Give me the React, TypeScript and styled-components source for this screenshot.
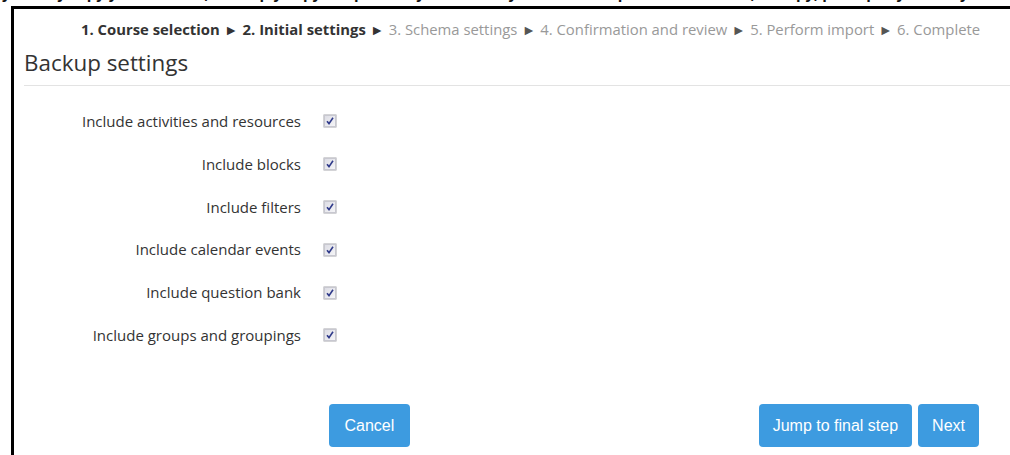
import React from "react";
import styled, { createGlobalStyle } from "styled-components";

const Global = createGlobalStyle`
  html, body { margin: 0; padding: 0; background: #fff; }
  body { font-family: "Open Sans", "Noto Sans", sans-serif; color: #333; overflow: hidden; }
`;

const Page = styled.div`
  width: 1010px;
  height: 455px;
  overflow: hidden;
  background: #fff;
`;

/* tail end of the previous paragraph, scrolled mostly out of view */
const Overflow = styled.div`
  height: 6px;
  overflow: hidden;
  position: relative;
`;

const OverflowText = styled.div`
  position: absolute;
  left: 2px;
  top: -17px;
  white-space: nowrap;
  font-family: "Open Sans", sans-serif;
  font-weight: 700;
  font-size: 15px;
  line-height: 20px;
  color: #111;
`;

const Frame = styled.div`
  margin-left: 11px;
  border-top: 3px solid #000;
  border-left: 3px solid #000;
  height: 460px;
  display: flex;
  flex-direction: column;
`;

const Steps = styled.div`
  padding: 10px 0 0 67px;
  font-size: 14.85px;
  line-height: 20px;
  white-space: nowrap;
  color: #999;
`;

const Step = styled.span<{ $done?: boolean }>`
  font-weight: ${(p) => (p.$done ? 700 : 400)};
  color: ${(p) => (p.$done ? "#333" : "#999")};
`;

const Arrow = styled.span<{ $done?: boolean }>`
  color: ${(p) => (p.$done ? "#333" : "#555")};
  font-size: 14px;
  margin: 0 4.5px;
`;

const Heading = styled.h2`
  margin: 8px 0 0 10px;
  font-size: 22.4px;
  font-weight: 400;
  line-height: 30px;
  color: #333;
`;

const Rule = styled.div`
  margin: 7px 0 0 10px;
  height: 1px;
  background: #e3e3e3;
`;

const Form = styled.div`
  display: grid;
  grid-template-columns: 287px 14px;
  column-gap: 22px;
  row-gap: 0;
  margin-top: 14px;
`;

const Label = styled.div`
  text-align: right;
  font-size: 15px;
  line-height: 42.8px;
  height: 42.8px;
  color: #333;
  white-space: nowrap;
`;

const BoxCell = styled.div`
  display: flex;
  align-items: center;
  height: 42.8px;
`;

const Buttons = styled.div`
  display: flex;
  align-items: center;
  margin-top: 47px;
  padding-left: 315px;
  padding-right: 31px;
`;

const Button = styled.button<{ $pad?: number }>`
  height: 43px;
  padding: 2px ${(p) => p.$pad ?? 14}px 0;
  border: none;
  border-radius: 4px;
  background: #3d9be0;
  color: #fff;
  font-family: "Liberation Sans", Arial, sans-serif;
  font-size: 16px;
  cursor: pointer;
`;

const Spacer = styled.div`
  flex: 1;
`;

const RightGroup = styled.div`
  display: flex;
  gap: 6px;
`;

function CheckBox() {
  return (
    <svg width="14" height="14" viewBox="0 0 14 14">
      <defs>
        <linearGradient id="cbg" x1="0" y1="0" x2="1" y2="1">
          <stop offset="0" stopColor="#dcdce4" />
          <stop offset="1" stopColor="#f6f6f8" />
        </linearGradient>
      </defs>
      <rect x="0.5" y="0.5" width="13" height="13" fill="#a7a7ae" />
      <rect x="1.5" y="1.5" width="11" height="11" fill="url(#cbg)" stroke="#c8c8d0" strokeWidth="1" />
      <path d="M4 7.2 L6 9.6 L10 3.8" fill="none" stroke="#2f3a8a" strokeWidth="1.6" />
    </svg>
  );
}

const options = [
  "Include activities and resources",
  "Include blocks",
  "Include filters",
  "Include calendar events",
  "Include question bank",
  "Include groups and groupings",
];

export default function App() {
  return (
    <Page>
      <Global />
      <Overflow>
        <OverflowText>
          you may copy your courses, or simply copy the parts of your course you wish to import into a course, or copy, perhaps by the way
        </OverflowText>
      </Overflow>
      <Frame>
        <Steps>
          <Step $done>1. Course selection</Step>
          <Arrow $done>►</Arrow>
          <Step $done>2. Initial settings</Step>
          <Arrow $done>►</Arrow>
          <Step>3. Schema settings</Step>
          <Arrow>►</Arrow>
          <Step>4. Confirmation and review</Step>
          <Arrow>►</Arrow>
          <Step>5. Perform import</Step>
          <Arrow>►</Arrow>
          <Step>6. Complete</Step>
        </Steps>
        <Heading>Backup settings</Heading>
        <Rule />
        <Form>
          {options.map((o) => (
            <React.Fragment key={o}>
              <Label>{o}</Label>
              <BoxCell>
                <CheckBox />
              </BoxCell>
            </React.Fragment>
          ))}
        </Form>
        <Buttons>
          <Button $pad={15.5}>Cancel</Button>
          <Spacer />
          <RightGroup>
            <Button>Jump to final step</Button>
            <Button>Next</Button>
          </RightGroup>
        </Buttons>
      </Frame>
    </Page>
  );
}
